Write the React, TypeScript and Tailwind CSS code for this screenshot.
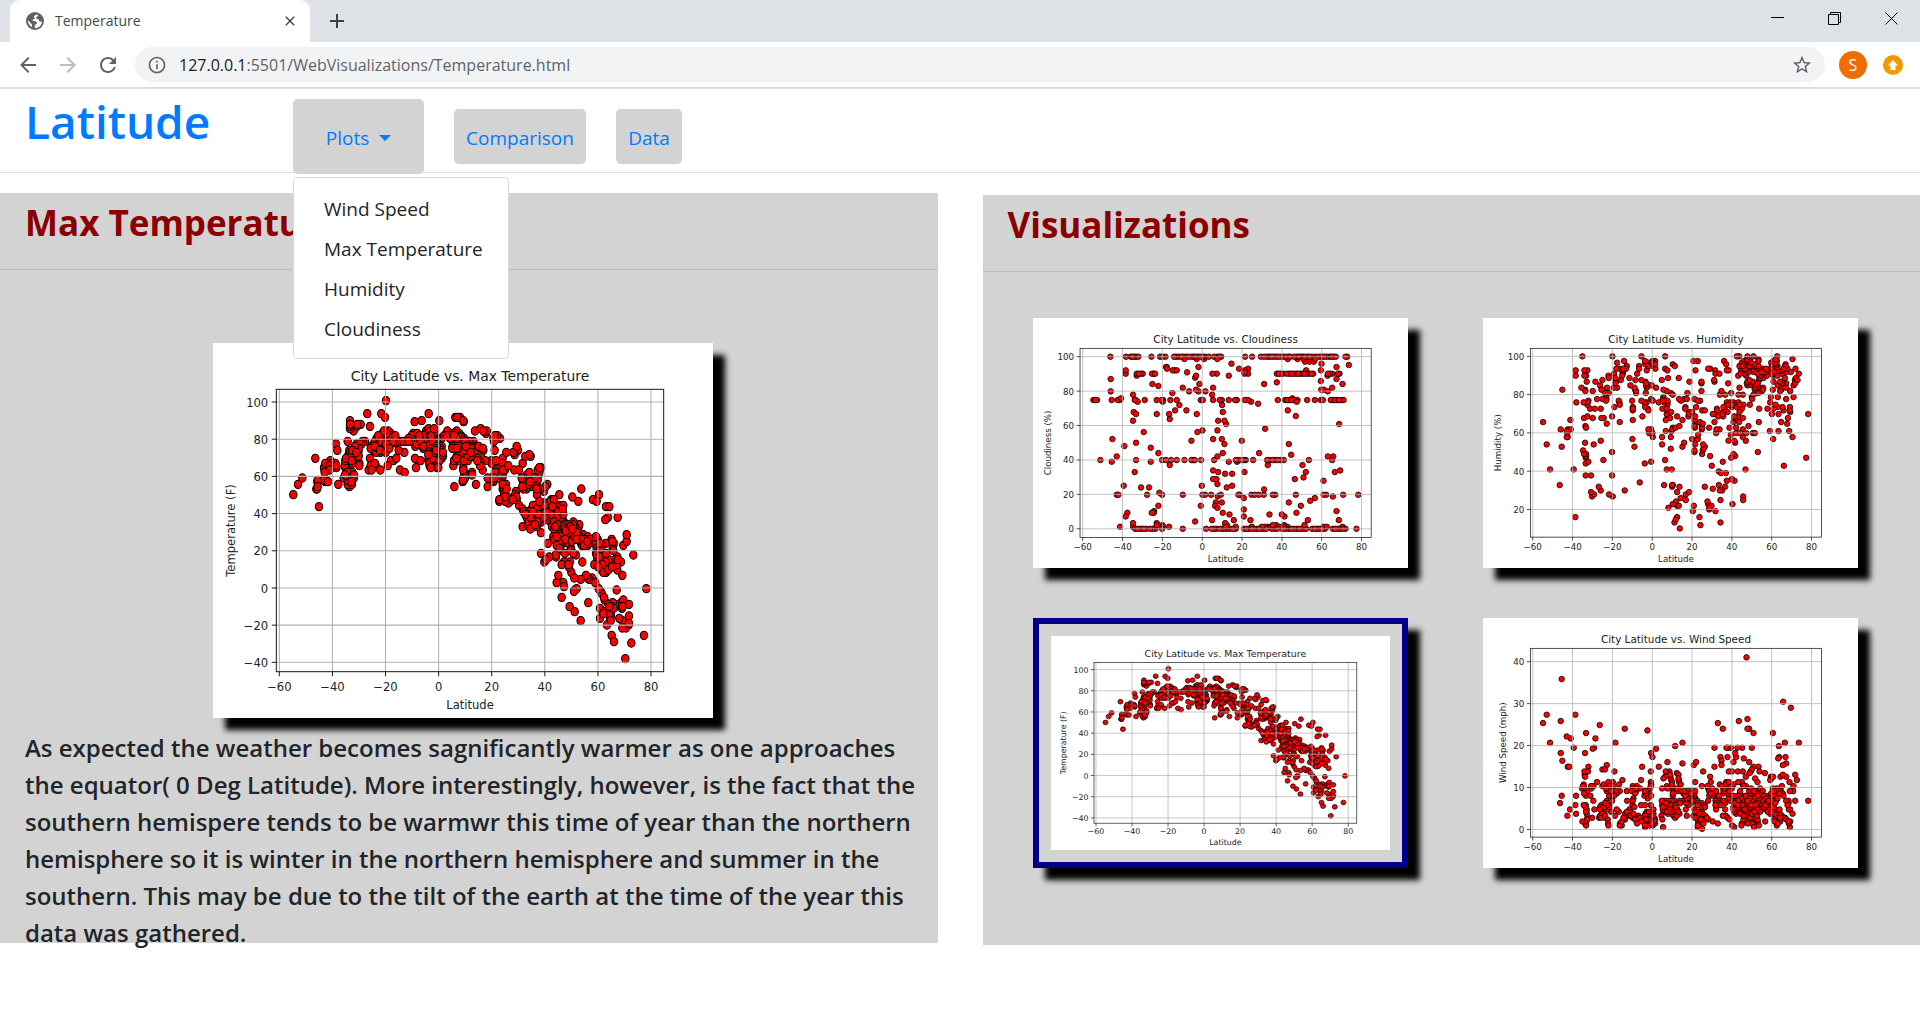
import { MdAdd, MdArrowBack, MdArrowForward, MdClose, MdInfoOutline, MdRefresh, MdStarBorder } from "react-icons/md";

type Tick = { label: string; at: number };

type Plot = {
  title: string;
  yLabel: string;
  yLabelX: number;
  // plate rectangle and axes rectangle, both in plate units
  plate: { x: number; y: number; w: number; h: number };
  axes: { left: number; top: number; right: number; bottom: number };
  xTicks: Tick[];
  yTicks: Tick[];
  // "y: x x x" rows of markers
  points: string;
};

function ticks(labels: string[], first: number, last: number): Tick[] {
  return labels.map((label, i) => ({ label, at: first + ((last - first) * i) / (labels.length - 1) }));
}

const LATITUDES = ["−60", "−40", "−20", "0", "20", "40", "60", "80"];

const temperature: Plot = {
  title: "City Latitude vs. Max Temperature",
  yLabel: "Temperature (F)",
  yLabelX: 19,
  plate: { x: -141, y: -111, w: 1500, h: 1125 },
  axes: { left: 49, top: 28, right: 1211, bottom: 875 },
  xTicks: ticks(LATITUDES, 58, 1173),
  yTicks: ticks(["100", "80", "60", "40", "20", "0", "−20", "−40"], 66, 847),
  points: `
    62: 378
    101: 322 364 506
    112: 375 586 592 600
    122: 270 485 538 610
    125: 464 611
    133: 270 292 302
    139: 270 291 330
    146: 270 506 522 662
    153: 281 372 385 498 512 525 562 590 645 670 680
    160: 368 380 392 460 472 500 512 524 576 585 597 678
    167: 355 366 377 389 400 406 455 463 478 490 502 514 526 552 560 571 582 594 603 705 712
    175: 350 358 370 382 395 405 446 454 466 480 495 508 520 532 545 570 580 590 600 612 700 708 720
    184: 263 308 315 345 354 364 376 388 400 410 420 430 438 445 457 468 482 494 506 518 530 578 592 604 616 628 640 702
    192: 228 290 299 305 341 352 365 378 392 412 470 483 496 510 522 590 600 610 620 632 642
    199: 285 293 335 345 358 370 382 466 490 505 515 530 545 578 595 605 618 630 642 656 770
    205: 283 297 332 343 354 377 388 490 512 525 540 577 590 607 619 633 645 669
    211: 232 268 277 296 341 360 366 378 416 512 528 543 600 613 625 640 670 704 774
    217: 270 280 289 349 361 377 433 511 524 538 549 608 620 632 644 657 739 760
    224: 266 275 295 505 520 532 548 597 610 622 635 645 662 764 808
    229: 264 272 296 515 535 549 590 606 630 637 796 812
    235: 166 258 266 330 409 465 506 518 545 589 614 627 652 728
    242: 211 256 265 275 393 400 482 507 523 538 582 595 612 624 652 676 694 708
    250: 196 213 226 257 268 277 298 345 508 530 662 695 711 728 788
    257: 195 209 222 229 255 265 298 332 347 383 509 516 533 580 660 724 733 745
    263: 192 202 229 256 468 512 531 535 610 733 838 843
    270: 194 209 326 335 361 420 610 668 708 729 735 763 777 833
    277: 194 262 277 434 612 636 705 712 724 808 838
    285: 255 262 273 282 636 703 716 728 800 808 836
    294: 127 251 261 270 282 610 615 683 702 714 727 785 798 812 822
    301: 173 192 264 276 609 611 700 788 805 817 833
    305: 172 196 204 265 274 608 700 810 820
    313: 114 235 263 270 276 648 728 738 795 806 826 862
    320: 173 268 583 683 732 787 800 814 829 856
    327: 169 171 728 740 790 800 830 840 852 964
    334: 732 768 835 852
    344: 100 732 766 831 898 1017
    351: 733 741 760 769 937
    359: 718 727 744 759 770 874 882 999
    364: 718 736 750 838 872 955 1010
    369: 745 838 852 865
    376: 777 819 840 853 867 898 910
    380: 177 820 838 862 877 902 1038 1048
    387: 788 815 829 842 856 870 900 908
    395: 791 804 818 830 844 858 867 883 895 907
    403: 796 811 823 835 850 861 872 885 900 910
    412: 800 812 822 838 852 864 876 888 901 1044 1073
    419: 804 816 830 842 857 866 880 893 904 1036
    426: 806 820 832 845 872 883 905 912 940
    434: 803 825 833 880 892 914 924 939 958
    440: 788 828 876 886 910 920 932 945 956
    447: 811 882 895 915 927 937 950
    453: 885 918 930 941 953
    458: 843 894 925 940 950
    464: 900 926 947 956 970 1100
    470: 880 890 903 930 944 958 983 1008
    478: 883 897 915 932 950 965 975 989 1004 1013 1055
    484: 889 922 935 967 982 997 1012 1057 1100
    490: 864 898 925 963 985 1005 1019 1037 1062
    496: 890 903 966 972 983 1017 1026 1090
    505: 898 933 1010 1022 1058
    512: 900 932 1020 1060
    520: 843 915 940 1008 1022 1038
    525: 887 948 1010 1030 1120
    531: 868 888 1018 1040 1072
    539: 858 1012 1025 1045 1065 1074
    546: 853 912 930 967 1020 1037 1048 1062 1083
    554: 905 925 1003 1014 1027 1040 1055 1070
    561: 927 1015 1028 1043 1056
    570: 1025 1035 1045 1072
    577: 934 1030 1038
    586: 895 978 1087
    594: 943 982 996
    598: 962 988 998
    608: 890 910 1006
    620: 912
    626: 950 1016 1159
    630: 945 1070
    634: 942 1022
    640: 1025
    652: 905 1032
    660: 1034 1090
    668: 985 1058 1084
    673: 1045 1065 1080 1107
    680: 929 1048 1055 1066 1088
    685: 1020 1050 1060 1086
    695: 944 1032 1052
    701: 1030 1048
    708: 1053 1107
    715: 1020 1050 1078
    722: 962 1052 1087
    730: 1095 1107
    735: 1041 1106
    744: 1087 1098
    766: 1055 1152
    785: 1062
    789: 1114
    836: 1096`,
};

const cloudiness: Plot = {
  title: "City Latitude vs. Cloudiness",
  yLabel: "Cloudiness (%)",
  yLabelX: 21,
  plate: { x: 189, y: 414, w: 1125, h: 750 },
  axes: { left: 330, top: 505, right: 1203, bottom: 1072 },
  xTicks: ticks(LATITUDES, 338, 1174),
  yTicks: ticks(["100", "80", "60", "40", "20", "0"], 530, 1046),
  points: `
    530: 421 468 482 487 492 498 505 544 570 577 586 612 618 625 634 640 648 655 664 670 676 683 690 697 704 716 732 742 748 753 825 846 872 882 890 897 903 910 918 925 932 940 948 955 960 972 980 986 992 998 1004 1012 1018 1025 1034 1042 1050 1056 1062 1070 1078 1084 1090 1097 1126 1131
    537: 643 680 702 742 953 982 1000 1017 1035
    545: 1005 1018 1031
    551: 784 1054
    555: 1136
    561: 588 590 685 1099
    566: 591 807 834
    571: 467 608 613 620 824 1008 1052
    577: 651 823
    581: 467 500 506 512 518 546 551 555 727 740 823 834 920 926 932 939 950 958 964 971 978 984 990 996 1003 1009 1016 1024 1029 1073 1079 1086 1103 1108
    587: 500 678 776 1072
    593: 675
    597: 422 1099
    603: 1052
    607: 920
    612: 547 688 882 1117
    618: 565
    623: 638 729 1086
    629: 678 1053 1061
    634: 422 657 685 706 1073
    639: 607
    644: 489 726
    655: 453 967
    660: 370 376 381 425 443 449 494 497 524 560 574 579 601 620 692 698 729 749 755 776 795 800 824 834 923 945 951 958 964 970 982 1011 1034 1052 1058 1082 1088 1094 1100 1106 1112 1120
    665: 503 578 843 980
    671: 864
    675: 628 756
    691: 615 649 953
    696: 491 758
    702: 498 560 597 680
    708: 977
    717: 599
    722: 489 744 763
    732: 768 1107
    746: 885
    751: 697 742
    756: 521 682
    777: 427 729 755
    782: 664 815
    788: 498
    792: 763 956
    798: 463
    803: 542
    819: 565 758 867
    824: 963
    829: 440 742 1073 1089
    840: 391 498 576 588 603 620 643 664 669 674 693 732 797 804 815 822 827 849 891 899 907 915 923 931 941 1016 1086
    845: 425 542 776 801
    855: 599 893 997
    871: 729 1110
    876: 494 744 823 1007 1094
    881: 765 786
    892: 1000
    897: 729 739 974
    902: 1060
    912: 742
    917: 461 695 786
    922: 513 537 770
    928: 882
    938: 568
    944: 440 445 531 576 638 697 705 723 752 805 809 844 854 866 881 908 915 977 1060 1068 1119 1164
    949: 743 1088
    954: 821 1034
    962: 1020
    967: 737 755 956
    977: 565 692 735 992
    983: 742
    988: 821
    993: 552 1099
    998: 472 545 551 758 979
    1003: 778 898 935
    1009: 467 821 943
    1020: 726 791 841 1013 1106
    1024: 675
    1029: 489 560 765
    1035: 560 577 770 908 918 942 1003
    1040: 450 489 578 597 766 797 845 875 884 893 902 910 918 926 935 943 952 1060 1070 1117
    1046: 495 502 509 515 521 528 540 548 556 576 638 708 725 732 739 750 757 764 771 780 789 797 822 829 836 845 853 860 867 875 882 889 905 914 922 935 942 949 957 964 972 980 987 994 1001 1008 1026 1034 1041 1048 1056 1064 1088 1095 1102 1109 1118 1126 1159`,
};

const humidity: Plot = {
  title: "City Latitude vs. Humidity",
  yLabel: "Humidity (%)",
  yLabelX: 21,
  plate: { x: 69, y: 54, w: 1125, h: 750 },
  axes: { left: 211, top: 145, right: 1084, bottom: 711 },
  xTicks: ticks(LATITUDES, 218, 1054),
  yTicks: ticks(["100", "80", "60", "40", "20"], 169, 628),
  points: `
    169: 367 457 544 615 830 837 862 880 951
    178: 861 895 946
    177: 997
    183: 492 555 577 585 700 713 792 852 870 895 940 950
    188: 471 555 565 578 845 855 872 933 945
    193: 556 572 585 638 798 850 862 875 885 938 948 976
    198: 500 537 565 577 644 838 847 868 882 895 935 952 975
    206: 469 480 490 498 537 586 615 744 750 842 853 866 878 898 908 918 932 950 970 982 1006
    211: 347 373 382 487 560 622 706 765 800 806 845 857 872 884 895 910 922 938 952 967
    216: 488 848 865 880 903 915 928 943 953 978 992
    221: 462 488 531 766 778 841 853 893 908 920 935 945 965 1016
    227: 347 373 378 445 486 834 858 898 920 940 952
    234: 446 466 508 624 656 898 910 974 1007
    240: 427 482 526 544 605 762 868 897 1004 1012
    245: 380 406 467 556 688 724 763 862 878 940 960 968
    250: 466 558 724 804 860 883 893 965 978 1005
    256: 420 511 558 568 575 862 875 888 953 967 1000
    263: 364 441 461 471 523 560 588 838 885 898 909 963 978
    269: 307 375 424 437 525 610 884 908 938 963
    273: 376 398 434 528 620 724 784 890 905 960 990
    279: 435 446 528 557 632 682 813 887 895
    284: 638 779 795 835 848 880
    291: 438 610 875 932 953 1000
    297: 411 427 439 573 608 657 672 680 703 876 978
    302: 385 438 476 516 544 578 610 622 663 713 720
    307: 349 371 383 478 553 560 596 612 622 800 810 820 835 930
    314: 382 479 622 804 815 825 838 850 869 946
    321: 463 518 555 676 708 790 815 830 842 952 967 989
    326: 390 404 422 518 563 607 620 675 770 845 897 922 940
    331: 518 565 622 726 734 772 795 840 970 989
    336: 633 686 696 790 802 838 990
    342: 620 686 762 758 787 935 955 1044
    349: 382 456 547 623 651 685 705 774 789 822 834
    354: 372 398 424 431 630 822 848 983
    360: 331 518 617 667 703 833
    366: 249 479 705 719 763 820 837 896 963
    371: 440 705 728 981
    378: 376 658 703 725 865
    383: 378 638 646 704 726 747 808 828
    388: 302 323 332 565 573 637 725 769 778 848
    393: 320 617 634 929 955 987
    399: 322 567 577 768 828 840 858 878 884
    404: 714 812
    411: 320 323 578 606 632 848 997
    417: 517 696 713 939
    422: 422 805 822 857
    428: 375 672 825
    433: 260 401 606 705 729
    440: 305 523 667 734
    446: 632 730
    451: 369 703 728
    456: 456 703 893
    462: 372 378 726 820
    468: 378 750 825
    473: 377 813 1038
    480: 430 615
    485: 385 573 788
    490: 377 554
    497: 755 971
    508: 270 341 620 635 856
    514: 776
    519: 783 797
    526: 377 393 456
    537: 815
    542: 800 823
    547: 539
    555: 299 612 636 638 776
    560: 416 636 658 734 795
    566: 758
    571: 422 494 779 786
    576: 393 651 687
    583: 402 447 677
    589: 396 458 849
    594: 662
    600: 677 781 849
    604: 648 742
    612: 638 744 817
    617: 651 656 701 754
    623: 625 748
    628: 747
    633: 698 766
    651: 346 651 718
    658: 647
    667: 643 781
    675: 721
    685: 659`,
};

const windSpeed: Plot = {
  title: "City Latitude vs. Wind Speed",
  yLabel: "Wind Speed (mph)",
  yLabelX: 27,
  plate: { x: 69, y: 54, w: 1125, h: 750 },
  axes: { left: 211, top: 145, right: 1084, bottom: 711 },
  xTicks: ticks(LATITUDES, 218, 1054),
  yTicks: ticks(["40", "30", "20", "10", "0"], 185, 688),
  points: `
    172: 859
    237: 305
    305: 969
    323: 992
    344: 260 346
    357: 862
    363: 302 836
    369: 249 773
    375: 419
    386: 494 788 862 867
    391: 562
    399: 378 880 938
    409: 320
    415: 332 406
    428: 270 466 667 974 1016
    438: 645 956
    443: 341 402 763 799 803 812 832 846 875
    446: 398 588
    459: 302 375 573 825
    471: 577 781 802 828 957 976
    475: 851 954
    482: 307 784
    486: 622 708 820 867
    490: 667 978
    495: 440 701 784 968
    500: 323 328 385 546 596 763 880 895
    508: 427 435 875
    514: 373 384 463 572 617 628 729 806 815 833 848 872 898
    519: 622 650 868 914
    524: 374 630 655 968 1005
    530: 375 615 631 750 857 932 939 961 978
    535: 610 655 885 933
    540: 487 543 633 656 930 1010
    546: 411 445 458 572 636 657 705 752 798 806 834 845 892 988
    553: 371 431 445 455 477 573 635 662 779 797 820 848
    558: 369 393 400 427 437 448 460 518 530 572 620 637 725 742 785 800 812 850 857 965 1000
    565: 366 373 394 438 450 518 528 540 570 606 622 640 650 744 757 790 803 815 873 900 938 950
    573: 378 382 440 452 468 479 500 515 528 555 558 638 648 660 672 683 694 705 747 755 768 790 808 840 867 880 888 908 940 952 962 989 999
    580: 372 455 470 525 556 568 638 670 680 692 703 752 768 790 805 840 880 892 933 945 958 968
    587: 305 348 378 391 447 455 462 553 560 573 638 675 690 702 747 757 769 777 808 820 832 845 857 868 878 893 912 925 940 950 970
    595: 520 563 680 693 706 805 815 828 842 854 868 882 896 918 930 942 952
    602: 400 440 456 501 518 605 612 622 633 643 659 670 683 697 712 744 766 782 790 810 822 834 846 862 875 910 925 938 948 978 985 1005 1044
    609: 300 435 447 610 618 627 638 660 678 694 713 725 768 780 795 825 838 850 863 880 893 918 930 945 985
    615: 346 371 377 424 442 447 517 543 555 572 606 620 630 641 685 712 733 766 782 822 834 846 860 872 886 905 915 936 982
    621: 376 420 432 447 523 608 622 636 648 725 735 769 820 832 845 857 870 883 896 910 925 940
    628: 330 380 403 420 438 470 508 580 608 618 628 640 652 677 703 725 768 795 820 830 842 854 865 878 892 905 918 930 945 958 986 990
    635: 378 453 476 500 510 560 567 610 620 632 643 655 705 715 822 834 845 858 870 883 900 923 935 950
    641: 348 380 425 433 495 508 520 556 570 580 624 635 658 705 718 728 828 840 850 862 875 888 930 943 960 997
    647: 322 420 435 465 503 512 523 535 555 567 578 604 640 650 680 700 712 722 735 788 797 850 865 878 890 945 965
    653: 382 396 417 423 435 490 518 528 540 557 570 582 645 705 717 728 740 802 855 870 882 948 960 975
    658: 382 443 495 525 535 546 558 572 585 607 712 722 735 745 808 850 878 892 941 953 978
    664: 367 378 485 530 545 556 568 583 722 758 862 893 915 943 960 985 990
    670: 376 444 480 531 555 565 575 585 714 730 773 845 863 875 953 986
    676: 378 445 479 485 555 568 578 713 722 816 844 882 896 950
    681: 555 609 713 822 882 989
    686: 726`,
};

// Markers come back interleaved, so that no row lies wholly above the one before it.
function parsePoints(rows: string) {
  const points: { x: number; y: number; order: number }[] = [];
  let y = 0;
  for (const token of rows.trim().split(/\s+/)) {
    if (token.endsWith(":")) y = parseInt(token, 10);
    else points.push({ x: Number(token), y, order: (points.length * 389) % 613 });
  }
  return points.sort((a, b) => a.order - b.order);
}

function ScatterPlot({ plot, height = 288 }: { plot: Plot; height?: number }) {
  const { plate, axes } = plot;
  const px = (x: number) => ((x - plate.x) / plate.w) * 432;
  const py = (y: number) => ((y - plate.y) / plate.h) * height;
  const left = px(axes.left);
  const right = px(axes.right);
  const top = py(axes.top);
  const bottom = py(axes.bottom);
  const ry = (3.2 * height) / 288;
  return (
    <svg
      viewBox={`0 0 432 ${height}`}
      role="img"
      aria-label={plot.title}
      className="block w-full bg-white"
      fontFamily='"DejaVu Sans", sans-serif'
      fontSize="10"
      fill="#222"
    >
      <g fill="#f00" stroke="#000" strokeWidth="0.9">
        {parsePoints(plot.points).map((p, i) => (
          <ellipse key={i} cx={px(p.x)} cy={py(p.y)} rx="3.2" ry={ry} />
        ))}
      </g>
      <g stroke="#b0b0b0" strokeWidth="0.9">
        {plot.xTicks.map((t) => (
          <line key={t.label} x1={px(t.at)} x2={px(t.at)} y1={top} y2={bottom} />
        ))}
        {plot.yTicks.map((t) => (
          <line key={t.label} x1={left} x2={right} y1={py(t.at)} y2={py(t.at)} />
        ))}
      </g>
      <g stroke="#222" strokeWidth="0.9" fill="none">
        <rect x={left} y={top} width={right - left} height={bottom - top} />
        {plot.xTicks.map((t) => (
          <line key={t.label} x1={px(t.at)} x2={px(t.at)} y1={bottom} y2={bottom + 4} />
        ))}
        {plot.yTicks.map((t) => (
          <line key={t.label} x1={left - 4} x2={left} y1={py(t.at)} y2={py(t.at)} />
        ))}
      </g>
      <g textAnchor="middle">
        {plot.xTicks.map((t) => (
          <text key={t.label} x={px(t.at)} y={bottom + height * 0.051}>{t.label}</text>
        ))}
      </g>
      <g textAnchor="end">
        {plot.yTicks.map((t) => (
          <text key={t.label} x={left - 7} y={py(t.at) + 4}>{t.label}</text>
        ))}
      </g>
      <g textAnchor="middle">
        <text x={(left + right) / 2} y={bottom + height * 0.1}>Latitude</text>
        <text x={(left + right) / 2} y={top - height * 0.023} fontSize="12">{plot.title}</text>
        <text transform={`translate(${plot.yLabelX} ${(top + bottom) / 2}) rotate(-90)`}>{plot.yLabel}</text>
      </g>
    </svg>
  );
}

function Globe() {
  return (
    <svg className="size-[18px]" viewBox="0 0 18 18">
      <circle cx="9" cy="9" r="9" fill="#5f6368" />
      <path d="M11.500 2.300c-1.700.7-3.300.9-3.600 2.300-.2 1 .9 1.100.7 2-.2.900-1.700.6-2.100 1.500-.4 1 1 1.100 2.500 1.200 1.500.1 2.200.9 1.900 1.900-.4 1.200-1.800 1.100-2.100 2.300-.2.900-.1 1.700.2 2.500 3.700.1 6.900-2.800 7-6.800-1 .7-2 .8-2.700.1-.8-.8-.2-1.700-1.200-2.200-.9-.4-1.900-.1-2-1.100-.1-1.100 1.300-1 1.700-1.900.3-.6.100-1.300-.3-1.800z" fill="#fff" />
      <path d="M2 8.300c-.2 3 1.300 5.400 3.900 6.700.3-1.200.2-2.100-.4-2.900-.8-1.100-2.400-2.200-3.500-3.800z" fill="#fff" />
    </svg>
  );
}

function BrowserChrome() {
  return (
    <div className="text-[#5f6368]">
      <div className="flex h-[42px] items-stretch bg-[#dee1e6]">
        <div className="ml-[10px] flex w-[300px] items-center rounded-t-[10px] bg-white pr-3 pl-4">
          <Globe />
          <span className="ml-[11px] flex-1 pb-[2px] text-[14px] text-[#45494d]">Temperature</span>
          <button aria-label="Close tab" className="text-[#3c4043]">
            <MdClose className="size-4" />
          </button>
        </div>
        <button aria-label="New tab" className="ml-[15px] text-[#3c4043]">
          <MdAdd className="size-6" />
        </button>
        <div className="ml-auto flex gap-[43px] pt-3 pr-[21px] text-black">
          <button aria-label="Minimize" className="h-[13px]">
            <svg className="size-[14px]" viewBox="0 0 14 14"><path d="M0 5.5h13" stroke="currentColor" /></svg>
          </button>
          <button aria-label="Restore" className="h-[13px]">
            <svg className="size-[14px]" viewBox="0 0 14 14" fill="none" stroke="currentColor"><path d="M.5 2.500h10v10H.5zM2.500 2.500v-2h10v10h-2" /></svg>
          </button>
          <button aria-label="Close window" className="h-[13px]">
            <svg className="size-[14px]" viewBox="0 0 14 14" fill="none" stroke="currentColor"><path d="M.5.5l12 12M12.500.5l-12 12" /></svg>
          </button>
        </div>
      </div>
      <div className="flex h-[47px] items-center border-b-2 border-[#dadce0] bg-white pr-[17px] pl-4">
        <button aria-label="Back" className="text-[#5f6368]"><MdArrowBack className="size-[24px]" /></button>
        <button aria-label="Forward" className="ml-4 text-[#babcbe]"><MdArrowForward className="size-[24px]" /></button>
        <button aria-label="Reload" className="ml-4"><MdRefresh className="size-[24px]" /></button>
        <div className="ml-[15px] flex h-[35px] flex-1 items-center rounded-full bg-[#f1f3f4] pr-3 pl-3">
          <MdInfoOutline className="size-5" />
          <a href="#address" className="ml-3 flex-1 text-[16px]">
            <span className="text-[#202124]">127.0.0.1</span>:5501/WebVisualizations/Temperature.html
          </a>
          <button aria-label="Bookmark"><MdStarBorder className="size-[22px]" /></button>
        </div>
        <button aria-label="Profile" className="ml-[14px] size-7 rounded-full bg-[#ef6c00] text-[16px] leading-none text-white">S</button>
        <button aria-label="Update" className="ml-4">
          <svg className="size-5" viewBox="0 0 20 20">
            <circle cx="10" cy="10" r="10" fill="#f29900" />
            <path d="M10 5l5 5.500h-2.500V15h-5v-4.500H5z" fill="#fff" />
          </svg>
        </button>
      </div>
    </div>
  );
}

const MENU = ["Wind Speed", "Max Temperature", "Humidity", "Cloudiness"];

function Navbar() {
  return (
    <nav className="flex h-[84px] items-start border-b border-[#e0e0e0] text-[19px] leading-[30px] text-[#007bff]">
      <a href="#latitude" className="mt-[2px] ml-[25px] w-[268px] text-[46px] leading-[60px] font-semibold">Latitude</a>
      <div className="relative mt-[10px]">
        <button className="flex h-[75px] w-[131px] items-center justify-center gap-[10px] rounded-[5px] bg-[#d3d3d3] pt-[2px]">
          Plots
          <svg className="h-[6px] w-3" viewBox="0 0 12 6"><path d="M0 0h12l-6 6z" fill="currentColor" /></svg>
        </button>
        <div className="absolute top-[78px] left-0 z-10 w-[216px] rounded-[5px] border border-black/15 bg-white pt-[11px] pb-[9px] text-[#212529]">
          {MENU.map((item) => (
            <a key={item} href="#plot" className="block px-[30px] py-[5px] whitespace-nowrap">{item}</a>
          ))}
        </div>
      </div>
      <a href="#comparison" className="mt-5 ml-[30px] flex h-[55px] w-[132px] items-center justify-center rounded-[5px] bg-[#d3d3d3] pt-[2px]">Comparison</a>
      <a href="#data" className="mt-5 ml-[30px] flex h-[55px] w-[66px] items-center justify-center rounded-[5px] bg-[#d3d3d3] pt-[2px]">Data</a>
    </nav>
  );
}

const SHADOW = "shadow-[12px_12px_6px_#000]";

function PanelTitle({ children }: { children: string }) {
  return (
    <h2 className="h-[77px] border-b border-black/10 pt-[7px] pl-[25px] text-[35px] leading-[45px] font-bold text-[#8b0000]">
      {children}
    </h2>
  );
}

export default function App() {
  return (
    <div className='min-h-screen bg-white font-["Open_Sans","Noto_Sans",sans-serif]'>
      <BrowserChrome />
      <Navbar />
      <main className="grid grid-cols-2 items-start gap-x-[45px]">
        <section className="mt-5 h-[750px] bg-[#d3d3d3]">
          <PanelTitle>Max Temperature</PanelTitle>
          <div className="mt-[73px] flex justify-center pr-3">
            <div className={`w-[500px] ${SHADOW}`}>
              <ScatterPlot plot={temperature} height={324} />
            </div>
          </div>
          <p className="mt-[11px] pl-[25px] text-[24px] leading-[37px] font-[650] whitespace-nowrap text-[#212529]">
            As expected the weather becomes sagnificantly warmer as one approaches<br />
            the equator( 0 Deg Latitude). More interestingly, however, is the fact that the<br />
            southern hemispere tends to be warmwr this time of year than the northern<br />
            hemisphere so it is winter in the northern hemisphere and summer in the<br />
            southern. This may be due to the tilt of the earth at the time of the year this<br />
            data was gathered.
          </p>
        </section>
        <section className="mt-[22px] h-[750px] bg-[#d3d3d3]">
          <PanelTitle>Visualizations</PanelTitle>
          <div className="mt-[46px] mr-[62px] ml-[50px] grid grid-cols-2 gap-x-[75px] gap-y-[50px]">
            <a href="#cloudiness" className={SHADOW}><ScatterPlot plot={cloudiness} /></a>
            <a href="#humidity" className={SHADOW}><ScatterPlot plot={humidity} /></a>
            <a href="#temperature" className={`border-[6px] border-[#00008b] bg-[#d3d3d3] p-3 ${SHADOW}`}>
              <ScatterPlot plot={temperature} height={272} />
            </a>
            <a href="#wind" className={SHADOW}><ScatterPlot plot={windSpeed} /></a>
          </div>
        </section>
      </main>
    </div>
  );
}
